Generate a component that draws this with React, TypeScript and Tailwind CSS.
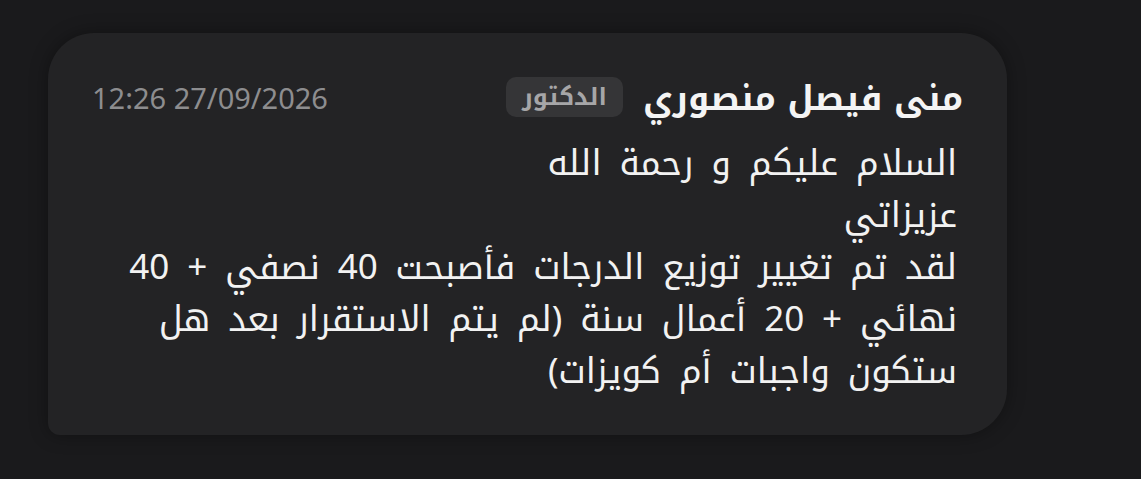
import React from "react";

const kufi = { fontFamily: '"Noto Kufi Arabic", "Noto Sans Arabic", "DejaVu Sans", sans-serif' };
const sans = { fontFamily: '"Noto Sans", "Open Sans", sans-serif' };

export default function App() {
  const lines = [
    "السلام عليكم و رحمة الله",
    "عزيزاتي",
    "لقد تم تغيير توزيع الدرجات فأصبحت 40 نصفي + 40",
    "نهائي + 20 أعمال سنة (لم يتم الاستقرار بعد هل",
    "ستكون واجبات أم كويزات)",
  ];
  return (
    <div className="w-[1141px] h-[479px] bg-[#1a1a1c] pt-[33px] pl-[48px]">
      <div
        dir="rtl"
        className="w-[959px] h-[402px] bg-[#232325] rounded-tl-[46px] rounded-tr-[46px] rounded-br-[46px] rounded-bl-[12px] shadow-[0_0_18px_rgba(0,0,0,0.35)] px-[44px] pt-[44px]"
      >
        <div className="flex items-center justify-between h-[40px]">
          <div className="flex items-center gap-[20px]">
            <span className="text-[34px] font-bold text-[#f4f4f4] leading-none mt-[4px]" style={kufi}>منى فيصل منصوري</span>
            <span className="h-[40px] px-[16px] rounded-[10px] bg-[#353537] text-[#a6a6a8] text-[24px] font-bold flex items-center leading-none" style={kufi}>
              الدكتور
            </span>
          </div>
          <span dir="ltr" className="text-[29px] text-[#8d8d8f] leading-none" style={sans}>12:26 27/09/2026</span>
        </div>
        <div className="mt-[21px] text-[35px] text-[#f2f2f2] leading-[52px] [word-spacing:6px] pr-[6px]" style={kufi}>
          {lines.map((l, i) => (
            <div key={i} className="whitespace-nowrap">{l}</div>
          ))}
        </div>
      </div>
    </div>
  );
}
